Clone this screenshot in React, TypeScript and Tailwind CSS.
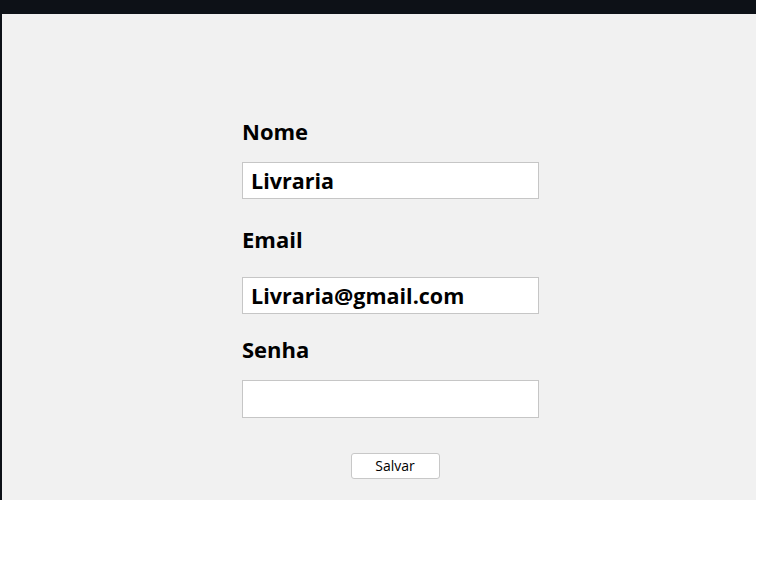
import React, { useState } from "react";

const font = { fontFamily: '"Open Sans", "Noto Sans", sans-serif' };

function Field({
  label,
  value,
  onChange,
  type,
  labelClass,
  inputClass,
}: {
  label: string;
  value: string;
  onChange: (v: string) => void;
  type: string;
  labelClass: string;
  inputClass: string;
}) {
  return (
    <div className="flex flex-col">
      <label className={"text-[22px] font-bold leading-[27px] text-black " + labelClass}>{label}</label>
      <input
        type={type}
        value={value}
        onChange={(e) => onChange(e.target.value)}
        className={"w-[297px] border border-[#c6c6c6] bg-white px-[8px] text-[21.5px] font-bold text-black outline-none " + inputClass}
      />
    </div>
  );
}

export default function App() {
  const [nome, setNome] = useState("Livraria");
  const [email, setEmail] = useState("Livraria@gmail.com");
  const [senha, setSenha] = useState("");

  return (
    <div className="w-[756px] h-[500px] bg-[#0d1117] pt-[14px] pl-[2px]" style={font}>
      <div className="h-full bg-[#f1f1f1] pl-[240px] pt-[104px]">
        <div className="flex flex-col w-[297px]">
          <Field label="Nome" value={nome} onChange={setNome} type="text" labelClass="mb-[17px]" inputClass="h-[37px]" />
          <div className="h-[27px]" />
          <Field label="Email" value={email} onChange={setEmail} type="email" labelClass="mb-[24px]" inputClass="h-[37px]" />
          <div className="h-[22px]" />
          <Field label="Senha" value={senha} onChange={setSenha} type="password" labelClass="mb-[17px]" inputClass="h-[38px]" />
          <div className="flex justify-center mt-[35px] pl-[9px]">
            <button className="w-[89px] h-[26px] rounded-[3px] border border-[#c8c8c8] bg-white text-[14px] text-black leading-none">
              Salvar
            </button>
          </div>
        </div>
      </div>
    </div>
  );
}
